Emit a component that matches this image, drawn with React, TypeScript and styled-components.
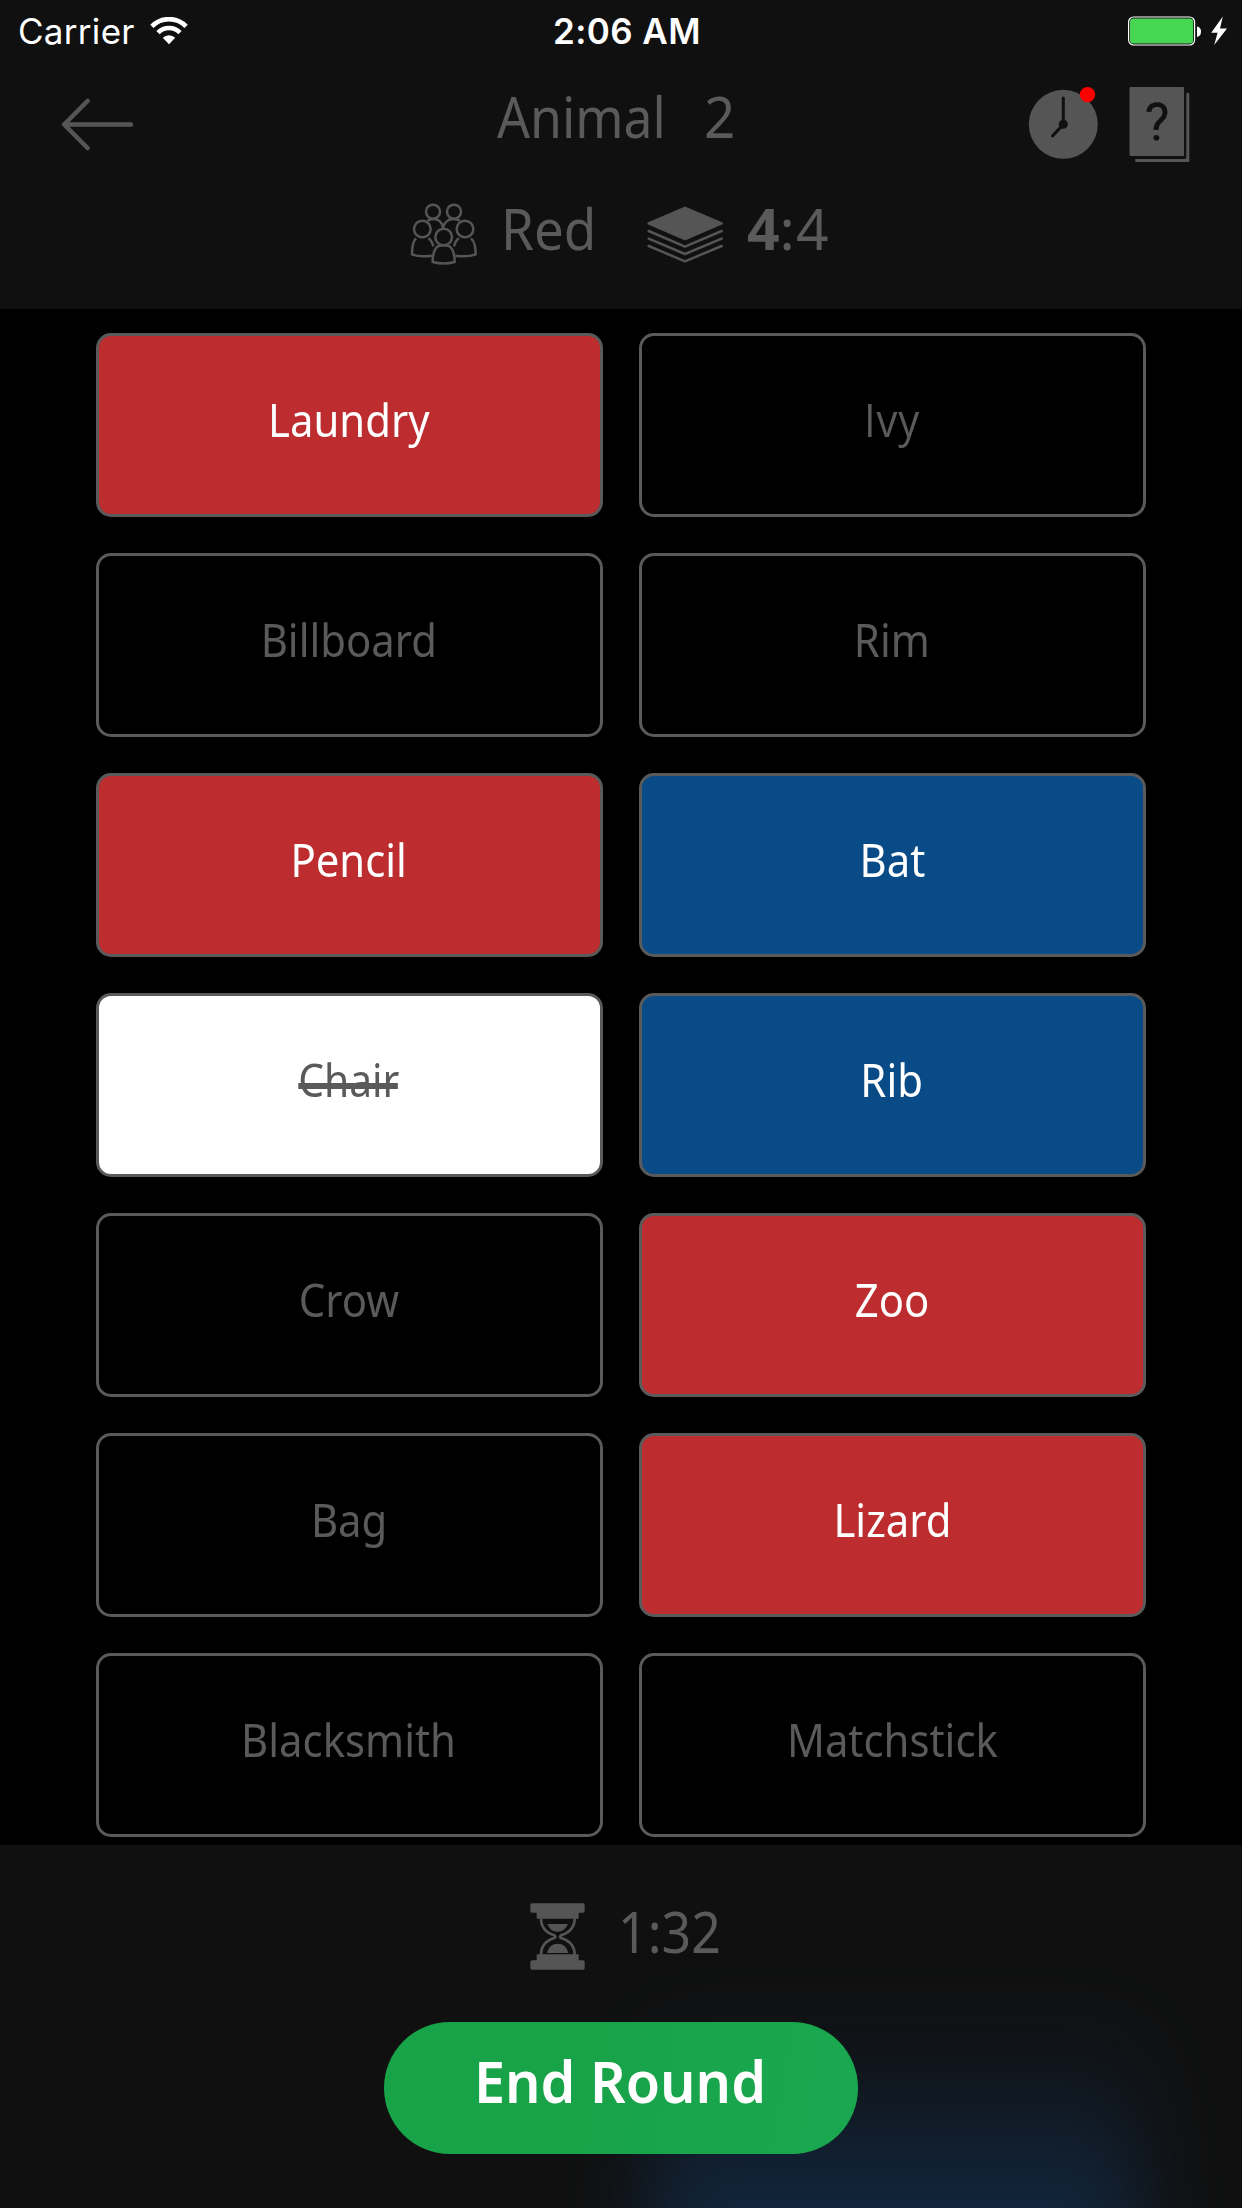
import React from "react";
import styled, { createGlobalStyle, css } from "styled-components";

const GREY = "#5a5a5a";
const ICON = "#555555";

const GlobalStyle = createGlobalStyle`
  html, body { margin: 0; padding: 0; background: #000; }
  * { box-sizing: border-box; }
`;

const Screen = styled.div`
  width: 1242px;
  height: 2208px;
  display: flex;
  flex-direction: column;
  overflow: hidden;
  background: #000;
  font-family: "Noto Sans", "Open Sans", sans-serif;
`;

const Header = styled.header`
  height: 309px;
  flex: none;
  background: #101010;
`;

const StatusBar = styled.div`
  height: 60px;
  display: grid;
  grid-template-columns: 1fr auto 1fr;
  align-items: center;
  padding: 2px 15px 0 18px;
  color: #fff;
  font-family: Inter, sans-serif;
  font-size: 35px;
`;

const Carrier = styled.div`
  display: flex;
  align-items: center;
  gap: 15px;
  font-weight: 400;
  letter-spacing: 0.3px;
`;

const Time = styled.div`
  font-weight: 600;
  padding-left: 9px;
  letter-spacing: 0.4px;
`;

const Power = styled.div`
  display: flex;
  justify-content: flex-end;
`;

const NavBar = styled.div`
  height: 128px;
  display: grid;
  grid-template-columns: 1fr auto 1fr;
  align-items: center;
  padding: 0 51px 0 60px;
`;

const NavActions = styled.div`
  display: flex;
  justify-content: flex-end;
  align-items: center;
  gap: 30px;
`;

const Title = styled.h1`
  margin: 0;
  display: flex;
  gap: 21px;
  font-size: 57px;
  font-weight: 400;
  line-height: 78px;
  padding: 0 17px 17px 0;
  color: ${GREY};
`;

const Stretch = styled.span<{ $x: number }>`
  display: inline-block;
  transform: scaleX(${(p) => p.$x});
  transform-origin: left center;
`;

const InfoRow = styled.div`
  height: 88px;
  padding: 3px 0 0 410px;
  display: flex;
  align-items: center;
  color: ${GREY};
  font-size: 57px;
  font-weight: 400;
  line-height: 78px;
`;

const InfoText = styled.span<{ $left: number; $width: number }>`
  display: block;
  width: ${(p) => p.$width}px;
  margin-left: ${(p) => p.$left}px;
  margin-top: -11px;
  white-space: nowrap;
`;

const LayersSlot = styled.span`
  display: flex;
  margin-left: 48px;
  padding-top: 3px;
`;

const Strong = styled.b`
  font-weight: 700;
`;

const Total = styled.span`
  font-weight: 400;
  letter-spacing: 1.2px;
`;

const Board = styled.main`
  height: 1536px;
  flex: none;
  overflow: hidden;
  padding: 24px 96px 0;
  display: grid;
  grid-template-columns: 507px 507px;
  grid-auto-rows: 184px;
  gap: 36px;
`;

type Tone = "plain" | "red" | "blue" | "out";

const tones = {
  plain: css`background: #000; color: ${GREY};`,
  red: css`background: #bd2d30; color: #fff;`,
  blue: css`background: #094b87; color: #fff;`,
  out: css`background: #fff; color: ${GREY};`,
};

const Card = styled.div<{ $tone: Tone }>`
  border: 3px solid ${GREY};
  border-radius: 15px;
  display: flex;
  align-items: center;
  justify-content: center;
  padding: 0 1px 10px 0;
  font-size: 45px;
  line-height: 60px;
  ${(p) => tones[p.$tone]}
`;

const Word = styled.span<{ $struck: boolean; $plainCapI: boolean }>`
  position: relative;
  transform: scaleX(${(p) => (p.$struck ? 0.905 : 0.93)});
  ${(p) => p.$plainCapI && css`
    font-family: "Open Sans", sans-serif;
    letter-spacing: 0.8px;
  `}
  ${(p) => p.$struck && css`
    &::after {
      content: "";
      position: absolute;
      left: 0;
      right: 2px;
      top: 33px;
      height: 6px;
      background: ${GREY};
    }
  `}
`;

const Footer = styled.footer`
  position: relative;
  flex: 1;
  overflow: hidden;
  background: #101010;
  display: flex;
  flex-direction: column;
  align-items: center;
`;

const Glow = styled.div`
  position: absolute;
  left: 650px;
  top: 160px;
  width: 490px;
  height: 420px;
  background: linear-gradient(to bottom, rgba(18, 39, 63, 0) 0, rgba(18, 39, 63, 0.45) 25%, #12273f 50%);
  filter: blur(42px);
`;

const Timer = styled.div`
  position: relative;
  height: 78px;
  margin-top: 52px;
  width: 182px;
  display: flex;
  align-items: center;
  color: ${GREY};
  font-size: 57px;
  line-height: 78px;
`;

const EndButton = styled.button`
  position: relative;
  width: 474px;
  height: 132px;
  margin-top: 47px;
  padding: 0 0 15px 11px;
  border: 0;
  border-radius: 66px;
  background: linear-gradient(100deg, #18a349 45%, #19a850 100%);
  color: #fff;
  font-family: inherit;
  font-size: 58px;
  font-weight: 600;
  white-space: nowrap;
`;

const Wifi = () => (
  <svg width="38" height="28" viewBox="0 0 38 28" fill="none">
    <path d="M1.9 9.3 A24 24 0 0 1 36.1 9.3" stroke="#fff" strokeWidth="4.6" />
    <path d="M8 15.6 A15.5 15.5 0 0 1 30 15.6" stroke="#fff" strokeWidth="4.6" />
    <path d="M12.8 20.7 A8.8 8.8 0 0 1 25.2 20.7 L19 27.2Z" fill="#fff" />
  </svg>
);

const Battery = () => (
  <svg width="99" height="30" viewBox="0 0 99 30">
    <rect x="0.6" y="1" width="66" height="28" rx="5" fill="none" stroke="#fff" strokeWidth="1.2" />
    <rect x="2" y="2.4" width="63.2" height="25.2" rx="3.6" fill="#46d651" />
    <path d="M69 10.5 Q73 11.3 73 15.5 Q73 20 69 21Z" fill="#fff" />
    <path d="M94.8 0.5 L83.2 16.8 H89.6 L86.2 29 L99 12.4 H92Z" fill="#fff" />
  </svg>
);

const Back = () => (
  <svg width="74" height="54" viewBox="0 0 74 54" fill="none" stroke={ICON} strokeWidth="4.6" strokeLinecap="round" strokeLinejoin="round">
    <path d="M27.5 4 L4.2 27.5 L27.5 51 M4.2 27.5 H71" />
  </svg>
);

const Clock = () => (
  <svg width="71" height="76" viewBox="0 0 71 76">
    <circle cx="35.3" cy="38.3" r="34.5" fill={ICON} />
    <path d="M35.3 12 V38.3 L24.5 50" fill="none" stroke="#101010" strokeWidth="3" strokeLinecap="round" />
    <circle cx="35.3" cy="38.3" r="4.5" fill="#101010" />
    <circle cx="59.5" cy="8.6" r="7.7" fill="#ff0000" />
  </svg>
);

const HelpBook = () => (
  <svg width="62" height="76" viewBox="0 0 62 76">
    <rect x="0.5" y="1" width="54.5" height="69" rx="1" fill={ICON} />
    <path d="M57.3 7.5 Q59 6 60.3 7.5 V75 Q60.3 76 59 76 H6.3 V73 H55.5 Q57.3 73 57.3 71.5Z" fill={ICON} />
    <text x="28" y="53.5" textAnchor="middle" fontFamily="Roboto, sans-serif" fontSize="52" fill="#101010" stroke="#101010" strokeWidth="0.3">?</text>
  </svg>
);

const People = () => (
  <svg width="67" height="62" viewBox="61 68 201 186" fill="none" stroke={ICON} strokeWidth="7.5">
    <circle cx="130" cy="94" r="21" />
    <circle cx="193" cy="94" r="21" />
    <path d="M113 121 Q130 112 145 119 Q158 127 160 143 Q163 127 177 119 Q193 112 211 121" />
    <circle cx="98" cy="146" r="25" />
    <circle cx="226" cy="146" r="25" />
    <path d="M79 174 Q67 186 67 222 Q90 231 127 226 M116 174 Q126 179 131 198" />
    <path d="M244 174 Q258 186 258 222 Q234 231 197 226 M208 174 Q198 179 193 198" />
    <circle cx="162" cy="170" r="25" />
    <path d="M143 199 Q129 212 129 245 Q162 254 195 245 Q195 212 181 199 Q162 191 143 199Z" />
  </svg>
);

const Layers = () => (
  <svg width="76" height="58" viewBox="79 79 228 174" fill="none" stroke={ICON} strokeWidth="7.5" strokeLinecap="round" strokeLinejoin="round">
    <path d="M84 131 L193 85 L303 131 L193 178Z" fill={ICON} />
    <path d="M84 154 L193 201 L303 154 M84 177 L193 223 L303 177 M84 199 L193 245 L303 199" />
  </svg>
);

const Hourglass = () => (
  <svg width="55" height="67" viewBox="150 189 165 201" fill={ICON}>
    <rect x="151" y="190" width="163" height="28" rx="5" />
    <rect x="170" y="214" width="126" height="22" rx="2" />
    <rect x="170" y="343" width="126" height="22" rx="2" />
    <rect x="151" y="361" width="163" height="28" rx="5" />
    <path
      d="M183 235 C183 268 203 280 223 286 Q229 290 223 294 C203 300 183 312 183 345 M284 235 C284 268 263 280 243 286 Q237 290 243 294 C263 300 284 312 284 345"
      fill="none"
      stroke={ICON}
      strokeWidth="8"
    />
    <path d="M202 252 H264 Q255 275 232 275 Q210 275 202 252Z" />
    <path d="M201 339 Q208 311 233 311 Q258 311 265 339Z" />
  </svg>
);

const cards: { word: string; tone: Tone }[] = [
  { word: "Laundry", tone: "red" },
  { word: "Ivy", tone: "plain" },
  { word: "Billboard", tone: "plain" },
  { word: "Rim", tone: "plain" },
  { word: "Pencil", tone: "red" },
  { word: "Bat", tone: "blue" },
  { word: "Chair", tone: "out" },
  { word: "Rib", tone: "blue" },
  { word: "Crow", tone: "plain" },
  { word: "Zoo", tone: "red" },
  { word: "Bag", tone: "plain" },
  { word: "Lizard", tone: "red" },
  { word: "Blacksmith", tone: "plain" },
  { word: "Matchstick", tone: "plain" },
];

export default function App() {
  return (
    <>
      <GlobalStyle />
      <Screen>
        <Header>
          <StatusBar>
            <Carrier>
              Carrier <Wifi />
            </Carrier>
            <Time>2:06 AM</Time>
            <Power>
              <Battery />
            </Power>
          </StatusBar>
          <NavBar>
            <Back />
            <Title>
              <Stretch $x={0.906}>Animal</Stretch>
              <Stretch $x={0.96}>2</Stretch>
            </Title>
            <NavActions>
              <Clock />
              <HelpBook />
            </NavActions>
          </NavBar>
          <InfoRow>
            <People />
            <InfoText $left={24} $width={98}>
              <Stretch $x={0.93}>Red</Stretch>
            </InfoText>
            <LayersSlot>
              <Layers />
            </LayersSlot>
            <InfoText $left={24} $width={90}>
              <Strong>4</Strong>
              <Total>:4</Total>
            </InfoText>
          </InfoRow>
        </Header>
        <Board>
          {cards.map(({ word, tone }) => (
            <Card key={word} $tone={tone}>
              <Word $struck={tone === "out"} $plainCapI={word.startsWith("I")}>
                {word}
              </Word>
            </Card>
          ))}
        </Board>
        <Footer>
          <Glow />
          <Timer>
            <Hourglass />
            <InfoText $left={33} $width={90}>
              <Stretch $x={0.91}>1:32</Stretch>
            </InfoText>
          </Timer>
          <EndButton>
            <Stretch $x={0.96}>End Round</Stretch>
          </EndButton>
        </Footer>
      </Screen>
    </>
  );
}
